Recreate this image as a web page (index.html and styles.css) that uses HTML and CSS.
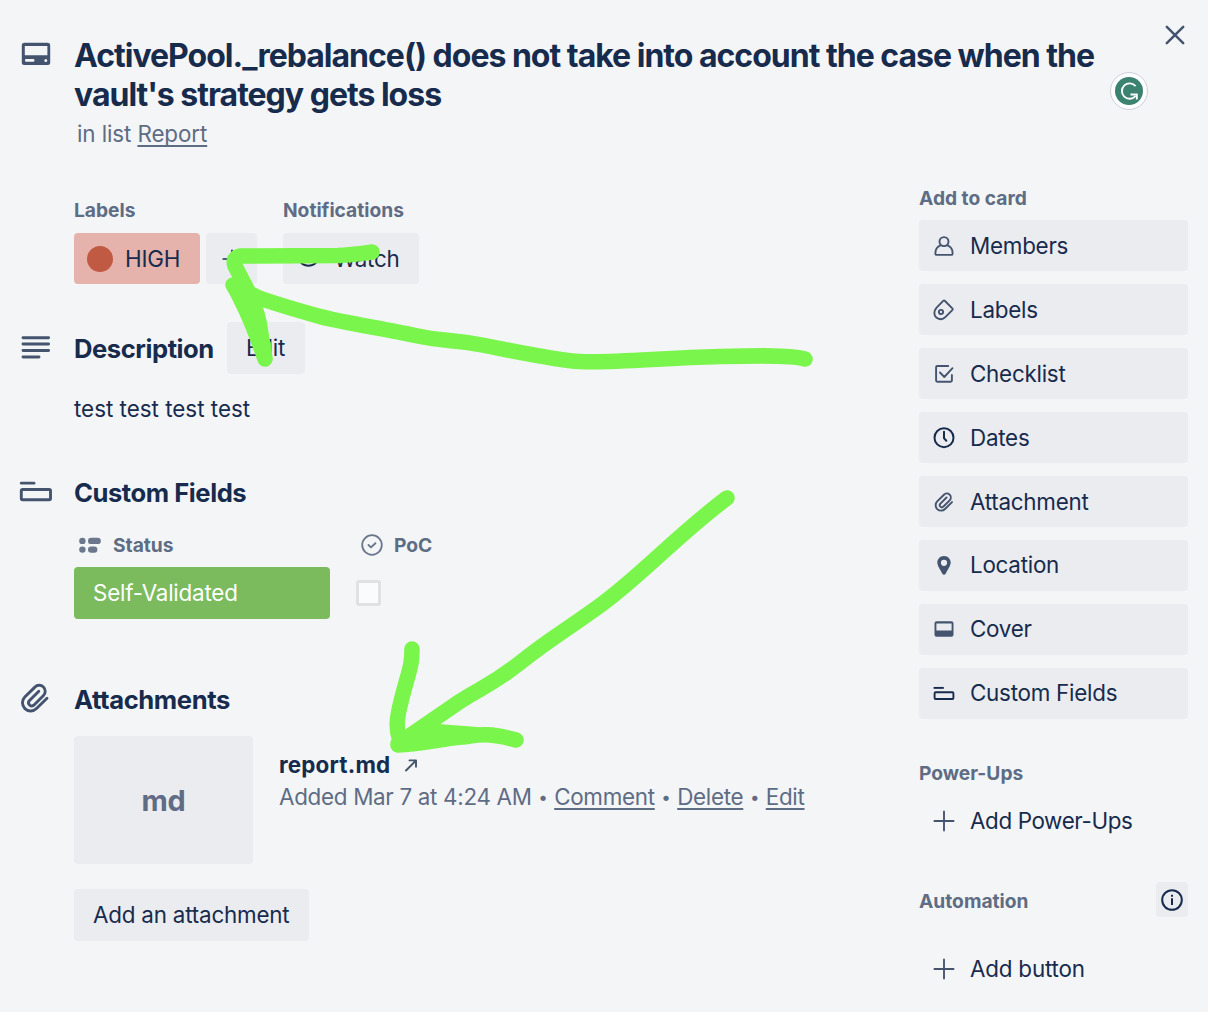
FILE: index.html
```html
<!DOCTYPE html>
<html lang="en">
<head>
<meta charset="utf-8">
<title>Card</title>
<link rel="stylesheet" href="styles.css">
</head>
<body>
<svg class="sprite" aria-hidden="true">
  <symbol id="clip" viewBox="0 0 30 30">
    <path d="M27 15.200 16.500 25.500A8.200 8.200 0 0 1 4.800 14L14.900 4.100A6 6 0 0 1 23.500 12.500L13.800 22.200A3.200 3.200 0 0 1 9.300 17.700L18.800 8.300" fill="none" stroke="currentColor" stroke-width="2.900" stroke-linecap="round"/>
  </symbol>
  <symbol id="plus" viewBox="0 0 20 20"><path d="M10 1.300v17.400M1.300 10h17.400" fill="none" stroke="currentColor" stroke-width="1.700" stroke-linecap="round"/></symbol>
</svg>
<div class="card">
  <main class="main">
    <header class="row title-row">
      <svg class="icon" width="30" height="24" viewBox="0 0 30 24"><path fill="currentColor" fill-rule="evenodd" d="M3.500.8h23A2.700 2.700 0 0 1 29.200 3.500v17a2.500 2.500 0 0 1-2.500 2.500H3.300a2.500 2.500 0 0 1-2.500-2.500v-17A2.700 2.700 0 0 1 3.500.8zM3.800 4v9.300h22.600V4zM5.300 17a1.400 1.400 0 0 0 0 2.800h6.800a1.400 1.400 0 0 0 0-2.800zM24.800 16.900a1.500 1.500 0 1 0 0 3 1.500 1.500 0 0 0 0-3z"/></svg>
      <div>
        <h1 class="title">ActivePool._rebalance() does not take into account the case when the<br>vault's strategy gets loss</h1>
        <p class="in-list">in list <a>Report</a></p>
      </div>
    </header>

    <section class="meta">
      <div>
        <h3 class="small-head">Labels</h3>
        <div class="meta-items">
          <span class="label"><i class="dot"></i>HIGH</span>
          <span class="btn add-label"><svg width="20" height="20"><use href="#plus"/></svg></span>
        </div>
      </div>
      <div>
        <h3 class="small-head">Notifications</h3>
        <span class="btn watch"><svg width="23" height="20" viewBox="0 0 23 20" fill="none" stroke="currentColor" stroke-width="2"><path d="M1.500 10C6 1 17 1 21.500 10C17 19 6 19 1.500 10z"/><circle cx="11.500" cy="10" r="3"/></svg>Watch</span>
      </div>
    </section>

    <section class="row description">
      <svg class="icon" width="30" height="24" viewBox="0 0 30 24"><path d="M2 1.700h25.600M2 8h25.600M2 14.500h25.600M2 21h16" stroke="currentColor" stroke-width="2.900" stroke-linecap="round"/></svg>
      <div>
        <div class="head-line"><h2 class="head">Description</h2><span class="btn edit">Edit</span></div>
        <p class="body-text">test test test test</p>
      </div>
    </section>

    <section class="row custom">
      <svg class="icon" width="34" height="22" viewBox="0 0 34 22" fill="none" stroke="currentColor" stroke-linecap="round"><path d="M2.300 2.200H15" stroke-width="2.800"/><rect x="2.300" y="8.500" width="29.200" height="10.300" rx="1.300" stroke-width="2.900"/></svg>
      <div>
        <h2 class="head">Custom Fields</h2>
        <div class="fields">
          <div class="field status">
            <h3 class="small-head"><svg width="22" height="17" viewBox="0 0 22 17" fill="currentColor"><circle cx="3.400" cy="3.900" r="3.200"/><circle cx="3.400" cy="12.600" r="3.200"/><rect x="9" y=".7" width="12.800" height="6.400" rx="3.200"/><rect x="9" y="9.400" width="9.400" height="6.400" rx="3.200"/></svg>Status</h3>
            <div class="select">Self-Validated</div>
          </div>
          <div class="field poc">
            <h3 class="small-head"><svg width="22" height="22" viewBox="0 0 22 22" fill="none" stroke="currentColor" stroke-linecap="round" stroke-linejoin="round"><circle cx="11" cy="11" r="9.800" stroke-width="1.800"/><path d="m7.500 11 2.500 2.400 4.400-4.200" stroke-width="1.900"/></svg>PoC</h3>
            <span class="checkbox"></span>
          </div>
        </div>
      </div>
    </section>

    <section class="row attachments">
      <svg class="icon clip" width="30" height="30"><use href="#clip"/></svg>
      <div>
        <h2 class="head">Attachments</h2>
        <div class="attachment">
          <div class="thumb">md</div>
          <div class="details">
            <p class="file">report.md<svg width="14" height="14" viewBox="0 0 14 14" fill="none" stroke="currentColor" stroke-width="1.900" stroke-linecap="round" stroke-linejoin="round"><path d="M2 12.500 12 2.500M5.500 2.400H12V8.800"/></svg></p>
            <p class="added">Added Mar 7 at 4:24 AM<b>•</b><a>Comment</a><b>•</b><a>Delete</a><b>•</b><a>Edit</a></p>
          </div>
        </div>
        <span class="btn add-attachment">Add an attachment</span>
      </div>
    </section>
  </main>

  <aside class="side">
    <h3 class="small-head">Add to card</h3>
    <nav class="actions">
      <a class="btn action"><svg width="22" height="22" viewBox="0 0 22 22" fill="none" stroke="currentColor" stroke-width="1.900"><circle cx="11" cy="6.600" r="4.500"/><path d="M7.700 10.400C4.500 11.500 2.400 14.500 2.400 18v.7c0 .8.400 1.200 1.200 1.200h14.800c.8 0 1.200-.4 1.200-1.200V18c0-3.500-2.100-6.500-5.300-7.600"/></svg><span>Members</span></a>
      <a class="btn action"><svg width="22" height="22" viewBox="0 0 22 22" fill="none" stroke="currentColor" stroke-width="1.900" stroke-linejoin="round"><path d="M10.200 1.900q.9-.8 1.800.1l7.300 7.300q.8.900 0 1.800l-7 7.100a6.300 6.300 0 0 1-10.900-4.400c0-2 .6-3.200 2-4.900z"/><circle cx="8" cy="13" r="2.100"/></svg><span>Labels</span></a>
      <a class="btn action"><svg width="22" height="22" viewBox="0 0 22 22" fill="none" stroke="currentColor" stroke-width="1.900" stroke-linecap="round" stroke-linejoin="round"><path d="M15.200 3H4.300q-1.200 0-1.200 1.200v13.300q0 1.200 1.200 1.200h13.400q1.200 0 1.200-1.200V12M7 9.500l4.300 4.500 8.200-8.800"/></svg><span>Checklist</span></a>
      <a class="btn action dark"><svg width="22" height="22" viewBox="0 0 22 22" fill="none" stroke="currentColor" stroke-width="2" stroke-linecap="round"><circle cx="11" cy="10.700" r="9.500"/><path d="M11 4.700v6.500l2.300 2.500"/></svg><span>Dates</span></a>
      <a class="btn action"><svg width="20" height="20" class="side-clip"><use href="#clip"/></svg><span>Attachment</span></a>
      <a class="btn action raised"><svg width="22" height="22" viewBox="0 0 22 22"><path fill="currentColor" fill-rule="evenodd" d="M11 .9c3.800 0 6.700 2.900 6.700 6.700 0 3.300-3 7.300-4.900 10.800-1 1.900-2.600 1.900-3.600 0C7.300 14.900 4.300 10.900 4.300 7.600c0-3.800 2.900-6.700 6.700-6.700zm0 3.800a3.100 3.100 0 1 0 0 6.200A3.100 3.100 0 0 0 11 4.700z"/></svg><span>Location</span></a>
      <a class="btn action raised"><svg width="22" height="22" viewBox="0 0 22 22"><path fill="currentColor" fill-rule="evenodd" d="M3.500 2.300h15a2 2 0 0 1 2 2v11.500a2 2 0 0 1-2 2h-15a2 2 0 0 1-2-2V4.300a2 2 0 0 1 2-2zm-.1 2.300v6.800h15.200V4.600z"/></svg><span>Cover</span></a>
      <a class="btn action dark raised"><svg width="22" height="22" viewBox="0 0 22 22" fill="none" stroke="currentColor" stroke-width="1.900"><path d="M.6 4.900h10.200"/><rect x="1.600" y="9.200" width="18.800" height="6.800" rx="1"/></svg><span>Custom Fields</span></a>
    </nav>
    <h3 class="small-head power">Power-Ups</h3>
    <a class="action plain"><svg width="22" height="22"><use href="#plus"/></svg><span>Add Power-Ups</span></a>
    <div class="automation"><h3 class="small-head">Automation</h3><span class="info"><svg width="22" height="22" viewBox="0 0 22 22" fill="none" stroke="currentColor" stroke-width="2"><circle cx="11" cy="11" r="9.800"/><path d="M11 9.300v6.700M11 5.800v2"/></svg></span></div>
    <a class="action plain"><svg width="22" height="22"><use href="#plus"/></svg><span>Add button</span></a>
  </aside>

  <svg class="close" width="20" height="20" viewBox="0 0 20 20"><path d="m1.800 1.800 16.400 16.400M18.200 1.800 1.800 18.200" stroke="currentColor" stroke-width="2.500" stroke-linecap="round"/></svg>
  <span class="badge"><svg width="28" height="28" viewBox="0 0 28 28"><circle cx="14" cy="14" r="14" fill="#3b8271"/><path d="M20.600 9.200A7.700 7.700 0 1 0 20.500 19M15.500 17.500h6.300v5" fill="none" stroke="#fff" stroke-width="1.900"/></svg></span>
  <svg class="ink" width="1208" height="1012" viewBox="0 0 1208 1012" fill="none" stroke="#7af54b" stroke-width="15.500" stroke-linecap="round" stroke-linejoin="round">
    <path d="M372 252C357 254 350 255 338 255.500L240 256Q232 258 235 266L248 291Q256 308 259 322L265 359Q254 327 245 308T233 285C245 291 254 296 262 299C280 305 300 311 320 316.500S385 329 415 335.500S450 339 482 345S555 360 580 361.500C615 363 660 358 720 356.500C760 355.500 795 355 805 359"/>
    <path d="M240 290 252 318 262 345" stroke-width="18"/>
    <path d="M727 498C675 537 640 577 598 607S550 639 521 662S480 688 459 702L398 744M399 737C395 725 398 712 404 690S412 664 412 649M398 745C420 744 440 739 462 737C475 736 483 731 516 740M398 745 428 731 480 735"/>
  </svg>
</div>
</body>
</html>
```
FILE: styles.css
```css
* { box-sizing: border-box; }
body {
  margin: 0;
  background: #f4f5f7;
  color: #172b4d;
  font-family: Inter, "Liberation Sans", sans-serif;
  font-size: 22.4px;
  line-height: 32px;
  letter-spacing: -0.2px;
}
h1, h2, h3, p { margin: 0; }
svg { display: block; flex: none; }
b { font-weight: 400; }
.sprite { position: absolute; width: 0; height: 0; }
.card {
  position: relative;
  display: grid;
  grid-template-columns: 1fr 269px;
  padding-right: 20px;
  width: 1208px;
  height: 1012px;
  overflow: hidden;
}
.main { min-width: 0; padding-top: 36px; }
.row { display: grid; grid-template-columns: 53px 1fr; padding-left: 21px; }
.icon { color: #44546f; margin-top: 6px; margin-left: -0.5px; }
.title { font-size: 32px; line-height: 39px; font-weight: 650; letter-spacing: -1px; white-space: nowrap; }
.in-list { padding: 4px 0 0 3px; color: #5e6c84; letter-spacing: -0.1px; }
a { color: inherit; }
.in-list a, .added a { text-decoration: underline; text-underline-offset: 3px; text-decoration-thickness: 2px; text-decoration-skip-ink: none; }
.meta { display: flex; gap: 26px; padding: 48px 0 0 74px; }
.small-head { font-size: 19.2px; line-height: 24px; font-weight: 650; letter-spacing: 0; color: #5e6c84; display: flex; align-items: center; }
.meta .small-head { margin-bottom: 11px; }
.meta-items { display: flex; gap: 6px; }
.btn { display: flex; align-items: center; height: 51px; border-radius: 4px; background: #ebecf0; }
.label { display: flex; align-items: center; gap: 12px; width: 126px; height: 51px; padding-left: 13px; border-radius: 4px; background: #e6b3ac; }
.dot { width: 26px; height: 26px; border-radius: 50%; background: #c05a43; }
.add-label { width: 51px; justify-content: center; }
.watch { width: 136px; padding-left: 14px; gap: 14px; }
.description { padding-top: 38px; }
.description .icon { margin-top: 14px; }
.head { font-size: 25.6px; line-height: 32px; font-weight: 650; letter-spacing: -0.45px; }
.head-line { display: flex; align-items: center; }
.head-line .head { width: 153px; padding-top: 1px; }
.edit { width: 78px; height: 52px; padding-left: 19px; }
.body-text { padding-top: 19px; letter-spacing: 0; }
.custom { padding-top: 52px; }
.custom .icon { margin: 4px 0 0 -2.5px; }
.fields { display: flex; gap: 26px; padding-top: 24px; }
.field .small-head { height: 24px; margin-bottom: 10px; }
.field .small-head svg { color: #6b778c; }
.status { width: 256px; }
.status .small-head { padding-left: 5px; gap: 12px; }
.poc .small-head { padding-left: 5px; gap: 11px; }
.select { height: 52px; padding: 10px 19px; border-radius: 4px; background: #7bbb5e; color: #fff; }
.checkbox { display: block; width: 25px; height: 26px; margin-top: 23px; border: 3px solid #dfe1e3; border-radius: 3px; background: #fafbfc; }
.attachments { padding-top: 65px; }
.attachments .head { letter-spacing: -0.4px; }
.attachments .clip { margin: -1px 0 0 -1px; }
.attachment { display: flex; gap: 26px; padding-top: 20px; }
.thumb { width: 179px; height: 128px; padding-top: 2px; display: grid; place-items: center; border-radius: 4px; background: #ebecf0; color: #5e6c84; font-size: 28.8px; font-weight: 700; }
.details { padding-top: 13px; white-space: nowrap; }
.file { display: flex; align-items: center; gap: 14px; font-weight: 700; letter-spacing: 0.2px; }
.file svg { color: #44546f; }
.added { color: #5e6c84; letter-spacing: -0.3px; }
.added b { display: inline-block; width: 22.5px; text-align: center; font-size: 17px; line-height: 20px; vertical-align: 2px; }
.add-attachment { width: 235px; height: 52px; margin-top: 25px; padding-left: 19px; }
.side { padding-top: 186px; }
.actions { display: flex; flex-direction: column; gap: 13px; margin-top: 10px; }
.action { display: flex; align-items: center; gap: 15px; padding-left: 14px; letter-spacing: -0.25px; }
.action span { padding-top: 1px; }
.action.raised span { padding: 0 0 1px; }
.action svg { color: #44546f; }
.action.dark svg { color: #172b4d; }
.side-clip { margin: 0 1px; }
.power { margin-top: 42px; }
.plain { height: 51px; margin-top: 10px; letter-spacing: -0.38px; }
.automation { display: flex; align-items: center; justify-content: space-between; margin-top: 36px; }
.automation .small-head { padding-top: 3px; }
.info { display: grid; place-items: center; width: 32px; height: 35px; border-radius: 4px; background: #ebecf0; }
.automation + .plain { margin-top: 26px; letter-spacing: -0.2px; }
.close { position: absolute; left: 1165px; top: 25px; color: #44546f; }
.badge { position: absolute; left: 1110px; top: 72px; width: 38px; height: 38px; display: grid; place-items: center; border: 1px solid #cfcfe0; border-radius: 50%; background: #fff; }
.ink { position: absolute; left: 0; top: 0; pointer-events: none; }
```
